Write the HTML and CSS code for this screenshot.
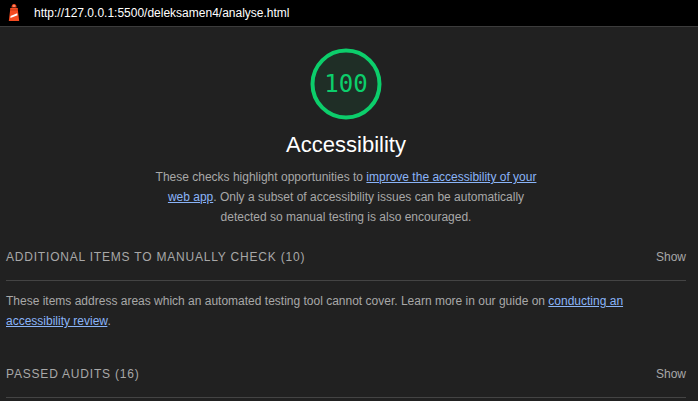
FILE: index.html
```html
<!DOCTYPE html>
<html lang="en">
<head>
<meta charset="utf-8">
<title>Lighthouse Report</title>
<link rel="stylesheet" href="styles.css">
</head>
<body>
<header class="topbar">
  <svg class="logo" width="12" height="19" viewBox="0 0 12 19" aria-hidden="true">
    <path d="M3.5 4.5 Q3.5 1 6 1 Q8.5 1 8.5 4.5 Z" fill="#f44b21"/>
    <rect x="5.3" y="2.2" width="1.4" height="1.6" fill="#ffb199"/>
    <path d="M2.2 5 L9.8 5 L9.8 6.5 L11.2 18 L0.8 18 L2.2 6.5 Z" fill="#f44b21"/>
    <path d="M2.2 6.5 L9.8 6.5 L9.9 7.5 L2.1 7.5 Z" fill="#c93a17"/>
    <path d="M2.6 13 L9.2 10.2 L9.5 12.2 L2.4 15 Z" fill="#ffffff"/>
  </svg>
  <span class="url">http://127.0.0.1:5500/deleksamen4/analyse.html</span>
</header>
<main class="report">
  <section class="category">
    <div class="gauge">
      <svg width="72" height="72" viewBox="0 0 72 72" aria-hidden="true">
        <circle cx="36" cy="36" r="33.5" fill="#1f2e26" stroke="#0cce6b" stroke-width="4"/>
      </svg>
      <span class="score">100</span>
    </div>
    <h1 class="title">Accessibility</h1>
    <p class="desc">These checks highlight opportunities to <a href="#">improve the accessibility of your web app</a>. Only a subset of accessibility issues can be automatically detected so manual testing is also encouraged.</p>
  </section>
  <section class="group">
    <div class="group-head">
      <span class="group-title">Additional items to manually check (10)</span>
      <span class="show">Show</span>
    </div>
    <p class="group-desc">These items address areas which an automated testing tool cannot cover. Learn more in our guide on <a href="#">conducting an accessibility review</a>.</p>
  </section>
  <section class="group">
    <div class="group-head">
      <span class="group-title">Passed audits (16)</span>
      <span class="show">Show</span>
    </div>
  </section>
</main>
</body>
</html>
```
FILE: styles.css
```css
html, body {
  margin: 0;
  padding: 0;
  background: #212121;
  font-family: "Liberation Sans", Arial, sans-serif;
  color: #a8a8a8;
  overflow: hidden;
}
.topbar {
  height: 26px;
  background: #000;
  border-bottom: 1px solid #3c3c3c;
  display: flex;
  align-items: center;
  padding-left: 8px;
  gap: 14px;
}
.logo { display: block; margin-top: -2px; }
.url {
  color: #ffffff;
  font-size: 12px;
}
.report {
  padding: 0 12px 0 6px;
}
.category {
  display: flex;
  flex-direction: column;
  align-items: center;
  padding-top: 21px;
}
.gauge {
  position: relative;
  width: 72px;
  height: 72px;
}
.gauge svg { display: block; }
.score {
  position: absolute;
  inset: 0;
  display: flex;
  align-items: center;
  justify-content: center;
  font-family: "DejaVu Sans Mono", "Liberation Mono", monospace;
  font-size: 24px;
  color: #0cce6b;
}
.title {
  margin: 12px 0 0;
  font-size: 22px;
  font-weight: normal;
  color: #ffffff;
  line-height: 26px;
}
.desc {
  margin: 9px 0 0;
  max-width: 400px;
  text-align: center;
  font-size: 12px;
  line-height: 20px;
  color: #a8a8a8;
}
a {
  color: #8ab4f8;
  text-decoration: underline;
}
.group-head {
  display: flex;
  justify-content: space-between;
  align-items: center;
  height: 44px;
  padding-bottom: 1px;
  border-bottom: 1px solid #444;
  margin-top: 8px;
}
.group-title {
  text-transform: uppercase;
  font-size: 12px;
  letter-spacing: 0.8px;
  color: #a8a8a8;
}
.show {
  font-size: 12px;
  color: #a8a8a8;
}
.group-desc {
  margin: 10px 0 21px;
  font-size: 12px;
  line-height: 20px;
  color: #a8a8a8;
}
```
